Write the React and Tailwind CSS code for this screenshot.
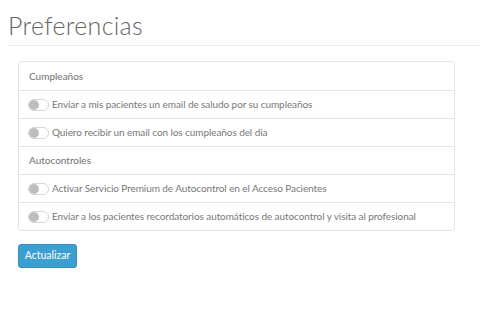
import React from 'react';

const Toggle = () => (
  <span className="relative inline-block w-[21px] h-[12px] rounded-full border border-[#d6d6d6] bg-white shrink-0">
    <span className="absolute left-[0px] top-[0px] w-[10px] h-[10px] rounded-full bg-[#bdbdbd]" />
  </span>
);

const sections = [
  {
    title: 'Cumpleaños',
    items: [
      'Enviar a mis pacientes un email de saludo por su cumpleaños',
      'Quiero recibir un email con los cumpleaños del dia',
    ],
  },
  {
    title: 'Autocontroles',
    items: [
      'Activar Servicio Premium de Autocontrol en el Acceso Pacientes',
      'Enviar a los pacientes recordatorios automáticos de autocontrol y visita al profesional',
    ],
  },
];

export default function App() {
  return (
    <div className="w-[480px] h-[332px] bg-white pl-2 pt-[10px] font-['Lato',sans-serif] text-[#777]">
      <h1 className="text-[25px] font-light leading-[30px] text-[#666] tracking-[0.3px]">Preferencias</h1>
      <div className="mt-[5px] border-b border-[#eeeeee]" />

      <div className="ml-[10px] mt-[15px] w-[437px] border border-[#dde7eb] rounded-[3px]">
        {sections.map((section, i) => (
          <div key={section.title}>
            <div className={`h-[28px] flex items-center px-[10px] text-[10px] text-[#707070] ${i > 0 ? 'border-t border-[#dde7eb]' : ''}`}>
              {section.title}
            </div>
            {section.items.map(item => (
              <div key={item} className="h-[28px] flex items-center gap-[3px] px-[9px] border-t border-[#dde7eb] text-[10px] text-[#777] whitespace-nowrap tracking-[-0.08px]">
                <Toggle />
                <span>{item}</span>
              </div>
            ))}
          </div>
        ))}
      </div>

      <button className="ml-[10px] mt-[13px] h-[24px] w-[59px] rounded-[3px] bg-[#3c9fd1] text-white text-[10.5px] border border-[#3591c0]">
        Actualizar
      </button>
    </div>
  );
}
